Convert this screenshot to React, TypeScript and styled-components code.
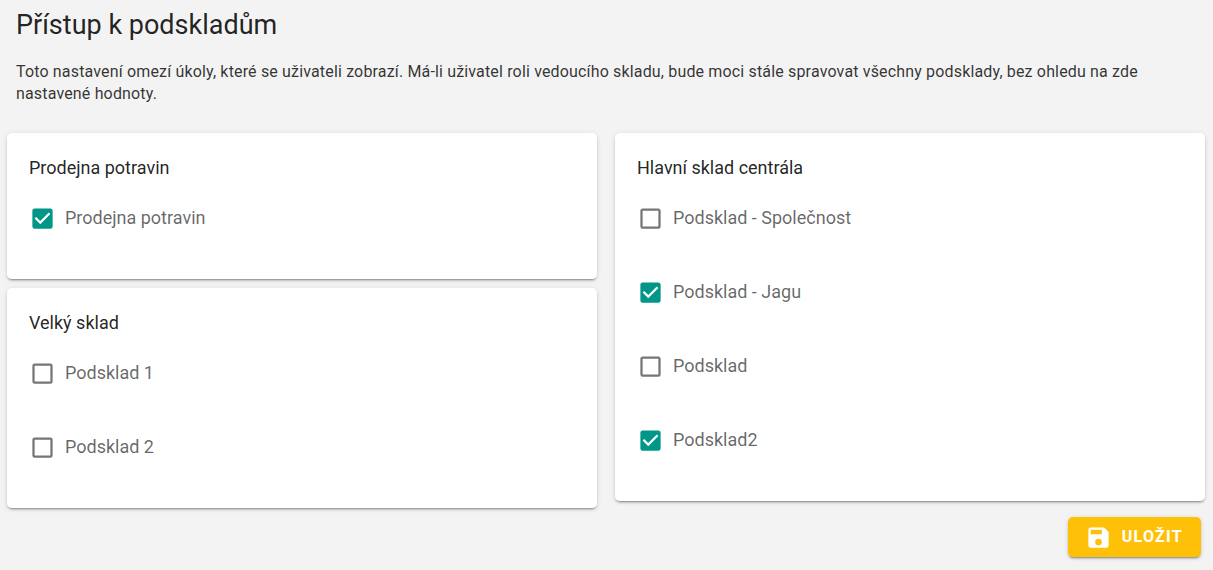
import React, { useState } from "react";
import styled, { createGlobalStyle } from "styled-components";

const GlobalStyle = createGlobalStyle`
  *, *::before, *::after { box-sizing: border-box; }
  body {
    margin: 0;
    background: #f3f3f3;
    color: rgba(0, 0, 0, 0.87);
    font-family: Roboto, "Liberation Sans", sans-serif;
  }
`;

const Page = styled.main`
  display: flex;
  flex-direction: column;
  padding: 9px 7px 12px;
`;

const Header = styled.header`
  padding: 0 9px;
`;

const Title = styled.h1`
  margin: 0;
  font-size: 27px;
  line-height: 32px;
  font-weight: 400;
`;

const Intro = styled.p`
  margin: 20px 0 28px;
  color: rgba(0, 0, 0, 0.8);
  font-size: 16px;
  line-height: 22px;
  letter-spacing: 0.01em;
`;

const Columns = styled.div`
  display: grid;
  grid-template-columns: 1fr 1fr;
  align-items: start;
  gap: 18px;
  padding-right: 1px;
`;

const Column = styled.div`
  display: flex;
  flex-direction: column;
  gap: 9px;
`;

const elevation = `
  0 3px 1px -2px rgba(0, 0, 0, 0.2),
  0 2px 2px 0 rgba(0, 0, 0, 0.14),
  0 1px 5px 0 rgba(0, 0, 0, 0.12)`;

const Card = styled.fieldset`
  min-width: 0;
  margin: 0;
  padding: 22px 22px 11px;
  border: 0;
  border-radius: 5px;
  background: #fff;
  box-shadow: ${elevation};
`;

const CardTitle = styled.legend`
  float: left;
  width: 100%;
  padding: 0;
  margin-bottom: 13px;
  font-size: 18px;
  line-height: 26px;
`;

const OptionList = styled.div`
  clear: both;
  display: flex;
  flex-direction: column;
`;

const Option = styled.label`
  display: flex;
  align-items: flex-start;
  gap: 9px;
  height: 74px;
  padding-top: 11px;
  color: rgba(0, 0, 0, 0.6);
  font-size: 18px;
  line-height: 26px;
  cursor: pointer;
`;

const BoxFrame = styled.span`
  display: grid;
  width: 27px;
  height: 27px;

  > * {
    grid-area: 1 / 1;
  }
`;

const NativeBox = styled.input`
  width: 100%;
  height: 100%;
  margin: 0;
  opacity: 0;
  cursor: pointer;
`;

const Icon = styled.svg`
  display: block;
  width: 27px;
  height: 27px;
  fill: currentColor;
  pointer-events: none;
`;

const BoxIcon = styled(Icon)<{ $checked: boolean }>`
  color: ${(p) => (p.$checked ? "#009688" : "rgba(0, 0, 0, 0.54)")};
`;

const Actions = styled.div`
  display: flex;
  justify-content: flex-end;
  padding: 9px 5px 0 0;
`;

const SaveButton = styled.button`
  display: flex;
  align-items: center;
  gap: 10px;
  height: 40px;
  padding: 0 18px 0 17px;
  border: 0;
  border-radius: 5px;
  background: #ffc107;
  color: #fff;
  font: 700 16px/24px Roboto, "Liberation Sans", sans-serif;
  letter-spacing: 0.08em;
  text-transform: uppercase;
  box-shadow: ${elevation};
  cursor: pointer;
`;

const BOX_BLANK =
  "M19,3H5C3.89,3 3,3.89 3,5V19A2,2 0 0,0 5,21H19A2,2 0 0,0 21,19V5C21,3.89 20.1,3 19,3M19,5V19H5V5H19Z";
const BOX_CHECKED =
  "M10,17L5,12L6.41,10.58L10,14.17L17.59,6.58L19,8M19,3H5C3.89,3 3,3.89 3,5V19A2,2 0 0,0 5,21H19A2,2 0 0,0 21,19V5C21,3.89 20.1,3 19,3Z";
const SAVE =
  "M15,9H5V5H15M12,19A3,3 0 0,1 9,16A3,3 0 0,1 12,13A3,3 0 0,1 15,16A3,3 0 0,1 12,19M17,3H5C3.89,3 3,3.9 3,5V19A2,2 0 0,0 5,21H19A2,2 0 0,0 21,19V7L17,3Z";

type Item = { name: string; checked: boolean };
type Store = { name: string; items: Item[] };

const columns: Store[][] = [
  [
    { name: "Prodejna potravin", items: [{ name: "Prodejna potravin", checked: true }] },
    {
      name: "Velký sklad",
      items: [
        { name: "Podsklad 1", checked: false },
        { name: "Podsklad 2", checked: false },
      ],
    },
  ],
  [
    {
      name: "Hlavní sklad centrála",
      items: [
        { name: "Podsklad - Společnost", checked: false },
        { name: "Podsklad - Jagu", checked: true },
        { name: "Podsklad", checked: false },
        { name: "Podsklad2", checked: true },
      ],
    },
  ],
];

function CheckOption({ item }: { item: Item }) {
  const [checked, setChecked] = useState(item.checked);
  return (
    <Option>
      <BoxFrame>
        <NativeBox
          type="checkbox"
          checked={checked}
          onChange={(e) => setChecked(e.target.checked)}
        />
        <BoxIcon $checked={checked} viewBox="0 0 24 24" aria-hidden="true">
          <path d={checked ? BOX_CHECKED : BOX_BLANK} />
        </BoxIcon>
      </BoxFrame>
      {item.name}
    </Option>
  );
}

export default function App() {
  return (
    <>
      <GlobalStyle />
      <Page>
        <Header>
          <Title>Přístup k podskladům</Title>
          <Intro>
            Toto nastavení omezí úkoly, které se uživateli zobrazí. Má-li uživatel roli vedoucího
            skladu, bude moci stále spravovat všechny podsklady, bez ohledu na zde nastavené
            hodnoty.
          </Intro>
        </Header>
        <Columns>
          {columns.map((stores, i) => (
            <Column key={i}>
              {stores.map((store) => (
                <Card key={store.name}>
                  <CardTitle>{store.name}</CardTitle>
                  <OptionList>
                    {store.items.map((item) => (
                      <CheckOption key={item.name} item={item} />
                    ))}
                  </OptionList>
                </Card>
              ))}
            </Column>
          ))}
        </Columns>
        <Actions>
          <SaveButton type="button">
            <Icon viewBox="0 0 24 24" aria-hidden="true">
              <path d={SAVE} />
            </Icon>
            Uložit
          </SaveButton>
        </Actions>
      </Page>
    </>
  );
}
